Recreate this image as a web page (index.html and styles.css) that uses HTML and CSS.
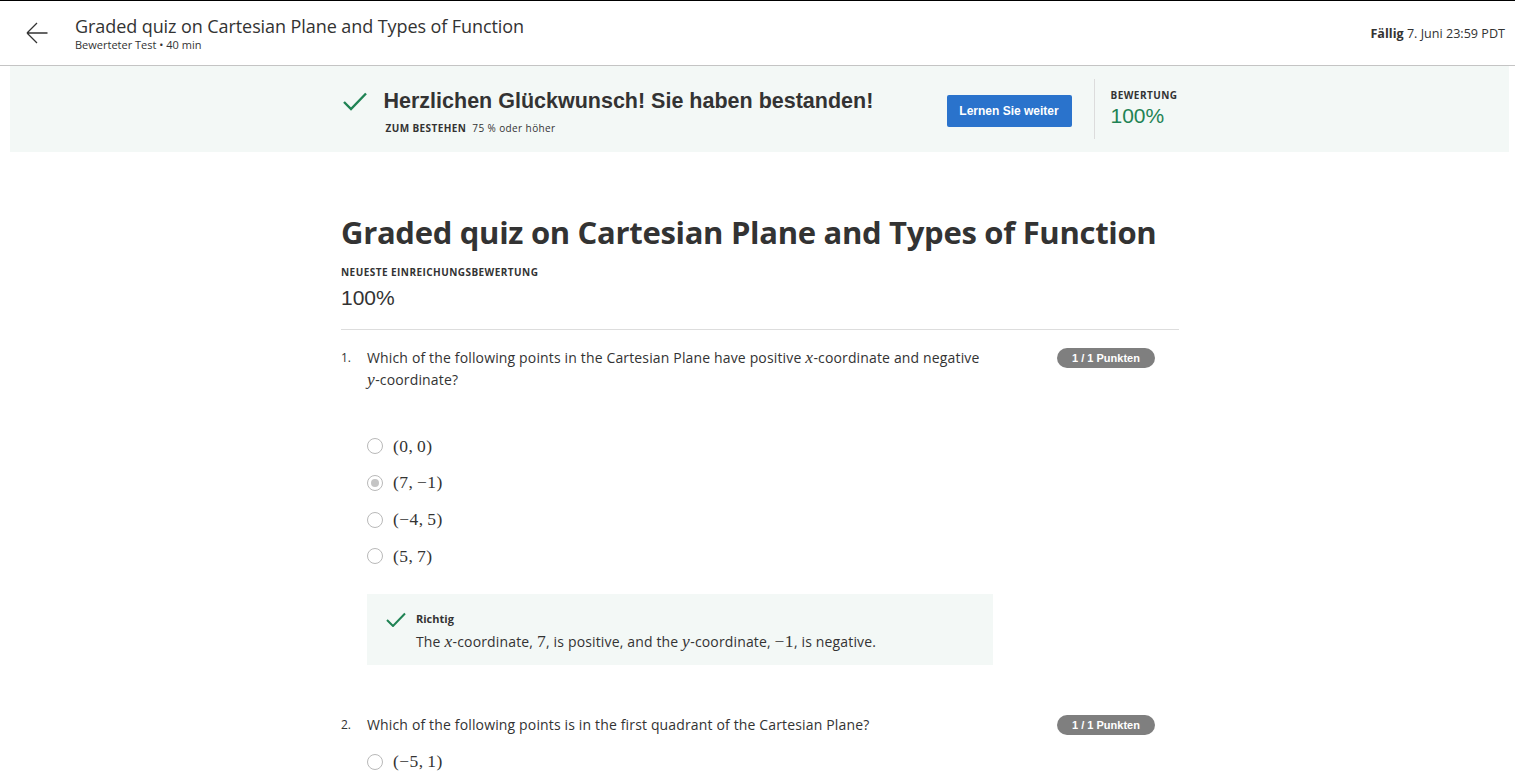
FILE: index.html
```html
<!DOCTYPE html>
<html lang="de">
<head>
<meta charset="utf-8">
<title>Graded quiz on Cartesian Plane and Types of Function</title>
<link rel="stylesheet" href="styles.css">
</head>
<body>
<header class="topbar">
  <div class="topbar-left">
    <svg class="back" width="22" height="22" viewBox="0 0 22 22" aria-hidden="true"><path d="M1 11H21.5M1 11L11 1M1 11L11 21" fill="none" stroke="#333" stroke-width="1.3"/></svg>
    <div class="titles">
      <div class="item-title">Graded quiz on Cartesian Plane and Types of Function</div>
      <div class="item-sub">Bewerteter Test • 40 min</div>
    </div>
  </div>
  <div class="due"><strong>Fällig</strong> 7. Juni 23:59 PDT</div>
</header>

<section class="banner">
  <div class="banner-inner">
    <div class="pass">
      <svg class="pass-check" width="24" height="19" viewBox="0 0 24 19" aria-hidden="true"><polyline points="1,10 8,17 23,1.5" fill="none" stroke="#1f8354" stroke-width="2.4"/></svg>
      <div class="pass-text">
        <h2 class="pass-title">Herzlichen Glückwunsch! Sie haben bestanden!</h2>
        <div class="pass-sub"><b>ZUM BESTEHEN</b>&nbsp; 75 % oder höher</div>
      </div>
    </div>
    <button class="btn">Lernen Sie weiter</button>
    <div class="grade">
      <div class="caps">BEWERTUNG</div>
      <div class="grade-val">100%</div>
    </div>
  </div>
</section>

<main class="content">
  <h1 class="quiz-title">Graded quiz on Cartesian Plane and Types of Function</h1>
  <div class="caps latest">NEUESTE EINREICHUNGSBEWERTUNG</div>
  <div class="score">100%</div>
  <hr class="sep">

  <div class="question">
    <div class="q-head">
      <span class="q-num">1.</span>
      <div class="q-text">Which of the following points in the Cartesian Plane have positive <span class="nw"><span class="m mi">x</span>-coordinate</span> and negative <span class="nw"><span class="m mi">y</span>-coordinate?</span></div>
      <span class="badge">1 / 1 Punkten</span>
    </div>
    <ul class="options options-spaced">
      <li><span class="radio"></span><span class="m">(0,&thinsp;0)</span></li>
      <li><span class="radio radio-on"></span><span class="m">(7,&thinsp;−1)</span></li>
      <li><span class="radio"></span><span class="m">(−4,&thinsp;5)</span></li>
      <li><span class="radio"></span><span class="m">(5,&thinsp;7)</span></li>
    </ul>
    <div class="feedback">
      <svg class="fb-check" width="20" height="15" viewBox="0 0 20 15" aria-hidden="true"><polyline points="1,8 7,14 19,1.5" fill="none" stroke="#1f8354" stroke-width="2"/></svg>
      <div class="fb-body">
        <div class="fb-title">Richtig</div>
        <div class="fb-text">The <span class="nw"><span class="m mi">x</span>-coordinate,</span> <span class="m">7</span>, is positive, and the <span class="nw"><span class="m mi">y</span>-coordinate,</span> <span class="m">−1</span>, is negative.</div>
      </div>
    </div>
  </div>

  <div class="question question-next">
    <div class="q-head">
      <span class="q-num">2.</span>
      <div class="q-text">Which of the following points is in the first quadrant of the Cartesian Plane?</div>
      <span class="badge">1 / 1 Punkten</span>
    </div>
    <ul class="options options-tight">
      <li><span class="radio"></span><span class="m">(−5,&thinsp;1)</span></li>
    </ul>
  </div>
</main>
</body>
</html>
```

FILE: styles.css
```css
* { box-sizing: border-box; }
html, body { margin: 0; padding: 0; }
body {
  font-family: "Open Sans", "DejaVu Sans", sans-serif;
  color: #333;
  background: #fff;
  overflow: hidden;
}

/* top bar */
.topbar {
  height: 66px;
  display: flex;
  align-items: center;
  justify-content: space-between;
  border-top: 1px solid #000;
  border-bottom: 1px solid #c4c4c4;
  padding: 0 10px 0 26px;
}
.topbar-left { display: flex; align-items: center; gap: 27px; }
.back { display: block; }
.item-title { font-size: 18px; line-height: 22px; color: #333; letter-spacing: -0.08px; }
.item-sub { font-size: 11px; line-height: 15px; color: #333; }
.due { font-size: 12.6px; color: #333; }
.due strong { font-weight: 700; }

/* banner */
.banner {
  margin: 0 6px 0 10px;
  height: 86px;
  background: #f3f8f6;
  display: flex;
  align-items: center;
}
.banner-inner {
  width: 838px;
  margin: 0 auto;
  display: flex;
  align-items: center;
}
.pass {
  flex: 1;
  display: flex;
  align-items: flex-start;
  gap: 17px;
  padding: 4px 0 0 2px;
}
.pass-check { display: block; margin-top: 5px; }
.pass-title {
  margin: 0;
  font-family: "Liberation Sans", Arial, sans-serif;
  font-weight: 700;
  font-size: 21.5px;
  line-height: 28px;
  color: #333;
}
.pass-sub { font-size: 10px; line-height: 14px; margin-top: 6px; padding-left: 2px; color: #333; letter-spacing: 0.4px; }
.pass-sub b { font-weight: 700; }
.btn {
  width: 125px;
  height: 32px;
  margin-top: 4px;
  border: 0;
  border-radius: 2px;
  background: #2a73cc;
  color: #fff;
  font-family: "Liberation Sans", Arial, sans-serif;
  font-weight: 700;
  font-size: 12px;
  padding: 0;
}
.grade {
  margin-left: 22px;
  border-left: 1px solid #dcdcdc;
  padding: 9px 0 0 16px;
  height: 60px;
  width: 85px;
}
.caps { font-size: 10px; line-height: 14px; font-weight: 700; color: #333; letter-spacing: 0.45px; }
.grade-val {
  margin-top: 2px;
  font-family: "Liberation Sans", Arial, sans-serif;
  font-size: 21px;
  line-height: 24px;
  color: #1f8354;
}

/* content */
.content {
  box-sizing: content-box;
  width: 838px;
  margin: 0 auto;
  padding: 60px 0 0 5px;
}
.quiz-title {
  margin: 0;
  font-size: 31px;
  line-height: 40px;
  font-weight: 700;
  letter-spacing: -0.3px;
  color: #333;
  white-space: nowrap;
}
.latest { margin-top: 13px; }
.score {
  margin-top: 6px;
  font-family: "Liberation Sans", Arial, sans-serif;
  font-size: 21px;
  line-height: 26px;
  color: #333;
}
.sep { border: 0; border-top: 1px solid #ddd; margin: 18px 0 0; height: 0; }

.question { margin-top: 17px; }
.question-next { margin-top: 49px; }
.q-head { display: flex; align-items: flex-start; }
.q-num { flex: none; width: 26px; font-size: 12px; line-height: 22px; }
.q-text { flex: 1; font-size: 14px; line-height: 22px; color: #333; letter-spacing: 0.15px; }
.nw { white-space: nowrap; }
.badge {
  flex: none;
  margin: 1px 24px 0 24px;
  width: 98px;
  height: 20px;
  border-radius: 10px;
  background: #7f7f7f;
  color: #fff;
  font-family: "Liberation Sans", Arial, sans-serif;
  font-weight: 700;
  font-size: 11px;
  display: flex;
  align-items: center;
  justify-content: center;
}

.m { font-family: "Liberation Serif", "DejaVu Serif", serif; font-size: 17.5px; letter-spacing: 0.4px; line-height: 1; }
.mi { font-style: italic; }

.options { list-style: none; margin: 0; padding: 0 0 0 26px; }
.options-spaced { margin-top: 37px; }
.options-tight { margin-top: 8px; }
.options li { height: 36.67px; display: flex; align-items: center; gap: 10px; }
.radio {
  flex: none;
  width: 16px;
  height: 16px;
  border: 1.5px solid #b9b9b9;
  border-radius: 50%;
  display: flex;
  align-items: center;
  justify-content: center;
}
.radio-on::after {
  content: "";
  width: 8px;
  height: 8px;
  border-radius: 50%;
  background: #c4c4c4;
}

.feedback {
  margin: 19px 0 0 26px;
  width: 626px;
  background: #f3f8f6;
  padding: 17px 20px 12px 19px;
  display: flex;
  align-items: flex-start;
  gap: 10px;
}
.fb-check { display: block; flex: none; margin-top: 1px; }
.fb-title { font-size: 11px; line-height: 16px; font-weight: 700; color: #333; }
.fb-text { margin-top: 4px; font-size: 14px; line-height: 22px; color: #333; letter-spacing: 0.15px; }
```
